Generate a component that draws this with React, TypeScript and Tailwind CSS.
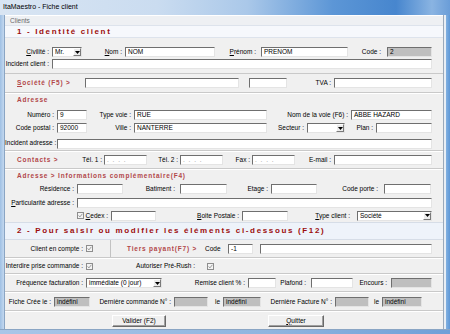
import React from 'react';

function U({ children }: { children: React.ReactNode }) {
  return <span className="underline underline-offset-1">{children}</span>;
}

function Lbl({ w, children, c }: { w: string; children?: React.ReactNode; c?: string }) {
  return (
    <span className={`${w} shrink-0 whitespace-nowrap text-right ${c ?? 'pr-[3px]'} leading-[8px]`}>{children}</span>
  );
}

function Inp({ w, v, grey, dots }: { w: string; v?: string; grey?: boolean; dots?: boolean }) {
  return (
    <div
      className={`${w} h-[10px] shrink-0 overflow-hidden whitespace-nowrap border border-t-[#6f6f6f] border-l-[#6f6f6f] border-r-[#e4e4e4] border-b-[#e4e4e4] pl-[2px] leading-[8px] ${grey ? 'bg-[#bfbfbf]' : 'bg-white'}`}
    >
      {dots ? <span className="text-[#9a9a9a] tracking-[1px]">. . . .</span> : v}
    </div>
  );
}

function Sel({ w, v }: { w: string; v?: string }) {
  return (
    <div className={`${w} h-[10px] shrink-0 flex border border-t-[#6f6f6f] border-l-[#6f6f6f] border-r-[#e4e4e4] border-b-[#e4e4e4] bg-white`}>
      <span className="flex-1 pl-[2px] leading-[8px] overflow-hidden whitespace-nowrap">{v}</span>
      <span className="w-[8px] h-full flex items-center justify-center bg-[#ececec] border-l border-t border-l-white border-t-white border-r border-b border-r-[#7a7a7a] border-b-[#7a7a7a]">
        <svg width="5" height="3" viewBox="0 0 5 3">
          <path d="M0 0h5L2.5 3z" fill="#000" />
        </svg>
      </span>
    </div>
  );
}

function Chk() {
  return (
    <svg width="7" height="7" viewBox="0 0 7 7" className="shrink-0">
      <rect x="0.5" y="0.5" width="6" height="6" fill="#f4f4f4" stroke="#8d8d8d" />
      <path d="M1.6 3.4l1.3 1.5L5.4 1.8" fill="none" stroke="#8d8d8d" strokeWidth="0.9" />
    </svg>
  );
}

function Btn({ children }: { children: React.ReactNode }) {
  return (
    <div className="w-full h-[12px] flex items-center justify-center bg-[#f0f0f0] border border-t-white border-l-white border-r-[#696969] border-b-[#696969] shadow-[inset_-1px_-1px_0_#a0a0a0] leading-[8px]">
      {children}
    </div>
  );
}

const section = 'text-[6.5px] font-bold tracking-[0.8px] text-[#b2474a] whitespace-nowrap';
const band = 'text-[8px] font-bold tracking-[1.65px] text-[#9c0d0d] whitespace-nowrap';

export default function App() {
  return (
    <div className="w-[450px] h-[334px] overflow-hidden bg-[#b7cfea] font-['Liberation_Sans',Arial,sans-serif] text-[6.5px] text-black">
      {/* Title bar */}
      <div className="h-[15px] flex items-center pl-[3px] text-[7px] bg-[linear-gradient(90deg,#d9e5f3_0%,#cadcf0_35%,#aac8e9_55%,#5c96d6_74%,#4786ce_88%,#8ab4e2_96%,#6a9dd8_100%)]">
        ItaMaestro - Fiche client
      </div>

      <div className="flex h-[314px]">
        <div className="w-[5px] shrink-0 bg-[linear-gradient(90deg,#9fc0e4,#c3d8ef)] border-r border-[#8aa5c4]" />

        <div className="w-[438px] shrink-0 bg-[#f0f0f0] flex flex-col">
          {/* Clients header */}
          <div className="h-[10px] flex items-center pl-[5px] text-[#6b6b6b] border-t border-white bg-[#eef0f3]">Clients</div>

          {/* 1 - Identité client */}
          <div className="h-[13px] flex items-center pl-[12px] bg-[#f6f8fc] border-t border-b border-[#dde3ec]">
            <span className={band}>1 - Identité client</span>
          </div>
          <div className="h-[8px]" />

          <div className="h-[12px] flex items-center">
            <Lbl w="w-[47px]"><U>C</U>ivilité :</Lbl>
            <Sel w="w-[30px]" v="Mr." />
            <Lbl w="w-[43px]"><U>N</U>om :</Lbl>
            <Inp w="w-[90px]" v="NOM" />
            <Lbl w="w-[46px]" c="pr-[5px]"><U>P</U>rénom :</Lbl>
            <Inp w="w-[87px]" v="PRENOM" />
            <Lbl w="w-[39px]" c="pr-[6px]">Code :</Lbl>
            <Inp w="w-[45px]" v="2" grey />
          </div>
          <div className="h-[12px] flex items-center">
            <Lbl w="w-[47px]">Incident client :</Lbl>
            <Inp w="w-[380px]" />
          </div>
          <div className="h-[3px]" />

          {/* Société */}
          <div className="h-[20px] flex items-center border-t border-b border-t-[#c9c9c9] border-b-[#c9c9c9]">
            <span className={`w-[80px] shrink-0 pl-[12px] ${section}`}><U>S</U>ociété (F5) &gt;</span>
            <Inp w="w-[154px]" />
            <span className="w-[10px] shrink-0" />
            <Inp w="w-[38px]" />
            <Lbl w="w-[47px]">TVA :</Lbl>
            <Inp w="w-[98px]" />
          </div>

          {/* Adresse */}
          <div className="h-[15px] flex items-start pt-[1px] pl-[12px] border-t border-white">
            <span className={section}>Adresse</span>
          </div>
          <div className="h-[14px] flex items-center">
            <Lbl w="w-[52px]">Numéro :</Lbl>
            <Inp w="w-[30px]" v="9" />
            <Lbl w="w-[47px]">Type voie :</Lbl>
            <Inp w="w-[133px]" v="RUE" />
            <Lbl w="w-[84px]">Nom de la voie (F6) :</Lbl>
            <Inp w="w-[81px]" v="ABBE HAZARD" />
          </div>
          <div className="h-[12px] flex items-center">
            <Lbl w="w-[52px]">Code postal :</Lbl>
            <Inp w="w-[30px]" v="92000" />
            <Lbl w="w-[47px]">Ville :</Lbl>
            <Inp w="w-[133px]" v="NANTERRE" />
            <Lbl w="w-[40px]">Secteur :</Lbl>
            <Sel w="w-[38px]" />
            <Lbl w="w-[31px]">Plan :</Lbl>
            <Inp w="w-[56px]" />
          </div>
          <div className="h-[17px] flex items-start pt-[5px] border-b border-[#c9c9c9]">
            <Lbl w="w-[52px]">Incident adresse :</Lbl>
            <Inp w="w-[375px]" />
          </div>

          {/* Contacts */}
          <div className="h-[18px] flex items-center border-t border-white border-b border-b-[#c9c9c9]">
            <span className={`w-[75px] shrink-0 pl-[12px] ${section}`}>Contacts &gt;</span>
            <Lbl w="w-[24px]" c="pr-[2px]">Tél. 1 :</Lbl>
            <Inp w="w-[43px]" dots />
            <Lbl w="w-[33px]" c="pr-[2px]">Tél. 2 :</Lbl>
            <Inp w="w-[43px]" dots />
            <Lbl w="w-[29px]" c="pr-[2px]">Fax :</Lbl>
            <Inp w="w-[43px]" dots />
            <Lbl w="w-[39px]">E-mail :</Lbl>
            <Inp w="w-[98px]" />
          </div>

          {/* Informations complémentaires */}
          <div className="h-[13px] flex items-center pl-[12px] border-t border-white">
            <span className={section}>Adresse &gt; Informations complémentaire(F4)</span>
          </div>
          <div className="h-[14px] flex items-center">
            <Lbl w="w-[72px]">Résidence :</Lbl>
            <Inp w="w-[46px]" />
            <Lbl w="w-[57px]" c="pr-[5px]">Batiment :</Lbl>
            <Inp w="w-[47px]" />
            <Lbl w="w-[44px]">Etage :</Lbl>
            <Inp w="w-[46px]" />
            <Lbl w="w-[67px]" c="pr-[6px]">Code porte :</Lbl>
            <Inp w="w-[47px]" />
          </div>
          <div className="h-[13px] flex items-center">
            <Lbl w="w-[72px]"><U>P</U>articularité adresse :</Lbl>
            <Inp w="w-[355px]" />
          </div>
          <div className="h-[13px] flex items-center">
            <span className="w-[72px] shrink-0" />
            <Chk />
            <Lbl w="w-[27px]"><U>C</U>edex :</Lbl>
            <Inp w="w-[45px]" />
            <Lbl w="w-[86px]"><U>B</U>oite Postale :</Lbl>
            <Inp w="w-[46px]" />
            <Lbl w="w-[69px]" c="pr-[7px]"><U>T</U>ype client :</Lbl>
            <Sel w="w-[75px]" v="Société" />
          </div>

          {/* 2 - Pour saisir */}
          <div className="h-[18px] flex items-center pl-[12px] bg-[#eef3fa] border-t border-b border-[#d6dde7]">
            <span className={band}>2 - Pour saisir ou modifier les éléments ci-dessous (F12)</span>
          </div>

          <div className="h-[18px] flex items-center border-b border-[#c9c9c9]">
            <Lbl w="w-[81px]">Client en compte :</Lbl>
            <Chk />
            <span className="w-[17px] shrink-0" />
            <span className="w-[1px] h-full shrink-0 bg-[#c2c2c2]" />
            <span className={`w-[94px] shrink-0 pl-[16px] ${section}`}>Tiers payant(F7) &gt;</span>
            <span className="w-[23px] shrink-0 leading-[8px]">Code</span>
            <Inp w="w-[25px]" v="-1" />
            <span className="w-[7px] shrink-0" />
            <Inp w="w-[172px]" />
          </div>

          <div className="h-[16px] flex items-center border-t border-white border-b border-b-[#c9c9c9]">
            <Lbl w="w-[81px]">Interdire prise commande :</Lbl>
            <Chk />
            <Lbl w="w-[114px]" c="pr-[12px]">Autoriser Pré-Rush :</Lbl>
            <Chk />
          </div>

          <div className="h-[18px] flex items-center border-t border-white border-b border-b-[#c9c9c9]">
            <Lbl w="w-[81px]">Fréquence facturation :</Lbl>
            <Sel w="w-[76px]" v="immédiate (0 jour)" />
            <Lbl w="w-[86px]">Remise client % :</Lbl>
            <Inp w="w-[28px]" />
            <Lbl w="w-[35px]" c="pr-[5px]">Plafond :</Lbl>
            <Inp w="w-[42px]" />
            <Lbl w="w-[38px]" c="pr-[4px]">Encours :</Lbl>
            <Inp w="w-[41px]" grey />
          </div>

          <div className="h-[19px] flex items-center border-t border-white border-b border-b-[#c9c9c9]">
            <Lbl w="w-[49px]">Fiche Crée le :</Lbl>
            <Inp w="w-[36px]" v="indéfini" grey />
            <Lbl w="w-[84px]">Dernière commande N° :</Lbl>
            <Inp w="w-[34px]" grey />
            <Lbl w="w-[15px]">le</Lbl>
            <Inp w="w-[38px]" v="indéfini" grey />
            <Lbl w="w-[74px]">Dernière Facture N° :</Lbl>
            <Inp w="w-[34px]" grey />
            <Lbl w="w-[13px]">le</Lbl>
            <Inp w="w-[40px]" v="indéfini" grey />
          </div>

          <div className="h-[18px] flex items-center border-t border-white">
            <span className="w-[107px] shrink-0" />
            <div className="w-[54px] shrink-0"><Btn>Valider (F2)</Btn></div>
            <span className="w-[102px] shrink-0" />
            <div className="w-[56px] shrink-0"><Btn><U>Q</U>uitter</Btn></div>
          </div>
        </div>

        <div className="w-[7px] shrink-0 border-l border-[#9aa9ba] bg-[linear-gradient(90deg,#e8eef5_0%,#e8eef5_25%,#7eaee0_40%,#5d97d7_100%)]" />
      </div>

      <div className="h-[5px] bg-[linear-gradient(90deg,#a9c6e8,#8fb5df_60%,#6f9fd8)] border-t border-[#8aa5c4]" />
    </div>
  );
}
